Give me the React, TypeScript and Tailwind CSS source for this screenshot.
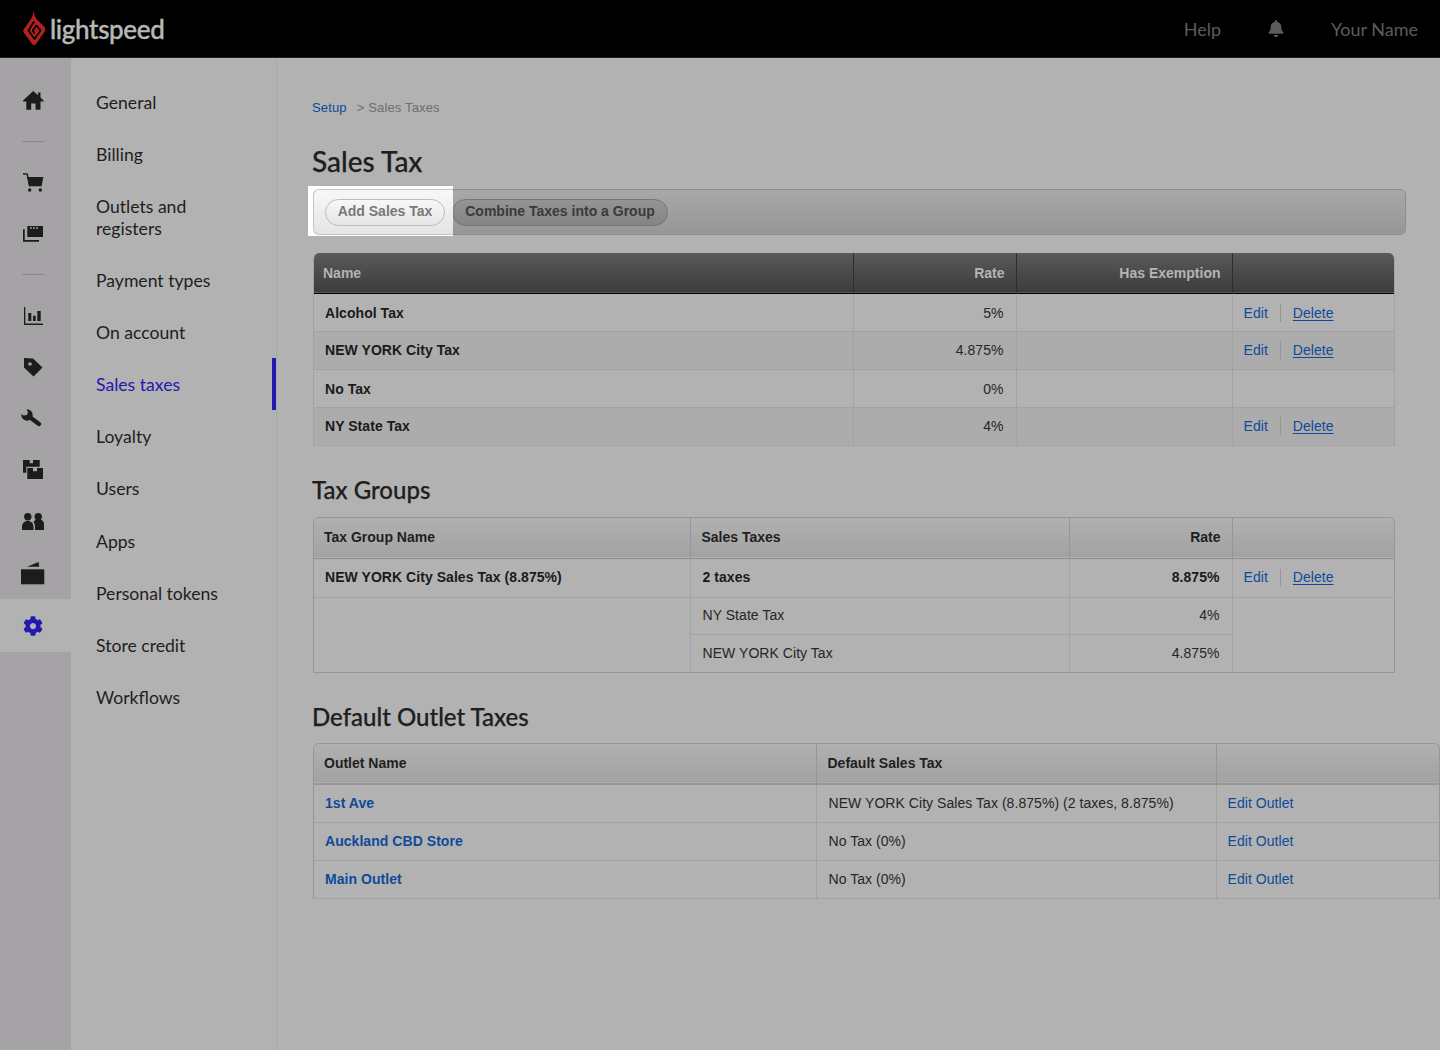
import { FaBell, FaCog } from "react-icons/fa";

const lato = "font-['Lato','Noto_Sans',sans-serif]";
const heading = "font-medium text-[#1e1e1e] [-webkit-text-stroke:0.25px_#1e1e1e]";
const ink = "#1c1c1c";
const railBg = "#a5a3a6";

const navItems = [
  "General",
  "Billing",
  "Outlets and registers",
  "Payment types",
  "On account",
  "Sales taxes",
  "Loyalty",
  "Users",
  "Apps",
  "Personal tokens",
  "Store credit",
  "Workflows",
];

function LogoMark() {
  return (
    <svg width="23" height="35" viewBox="0 0 23 35" fill="none">
      <path d="M10.500 0 Q11 5 13.500 8 L21.500 16 Q23 18.500 21.500 21 L12.500 33.500 Q11 35 9.500 33.500 L1 22 Q-0.500 20 1 18 L8 8 Q10 5 10.500 0 Z" fill="#b3201f" />
      <path d="M11 10.500 L5.500 19.500 L11.500 28 L17.500 19.500 L13.500 14.500 L9.800 19.500 L11.500 22.500" stroke="#000" strokeWidth="1.800" strokeLinejoin="round" />
    </svg>
  );
}

function HomeIcon() {
  return (
    <svg width="21" height="19" viewBox="0 0 21 19" fill={ink}>
      <path d="M10.300 0 L15 4.300 V1.500 H17.500 V6.600 L20.600 9.500 V10.500 H17.500 V18.700 H12.500 V12.500 H8.200 V18.700 H3.300 V10.500 H0 V9.500 Z" />
    </svg>
  );
}

function CartIcon() {
  return (
    <svg width="21" height="19" viewBox="0 0 21 19" fill={ink}>
      <path d="M0 0 L4.800 0.500 L7.400 13.300 H5.900 L3.500 1.800 L0 1.400 Z" />
      <path d="M4.200 4 H20.300 L18.700 13.300 H6.300 Z" />
      <circle cx="6.700" cy="17" r="1.700" />
      <circle cx="17.300" cy="17" r="1.700" />
    </svg>
  );
}

function CardsIcon() {
  return (
    <svg width="20" height="16" viewBox="0 0 20 16" fill={ink}>
      <path d="M4.300 0H20V11H4.300z" />
      <path d="M0 3.300H1.700V14H16V15.700H0z" />
      <circle cx="8" cy="2" r="0.900" fill={railBg} />
      <circle cx="11" cy="2" r="0.900" fill={railBg} />
      <circle cx="14" cy="2" r="0.900" fill={railBg} />
    </svg>
  );
}

function ChartIcon() {
  return (
    <svg width="19" height="18" viewBox="0 0 19 18" fill={ink}>
      <path d="M0 0h1.300V16.400H19V18H0z" />
      <path d="M4.300 6h3v8h-3zM9 8.700h2.700V14H9zM13.300 4h3.400v10h-3.400z" />
    </svg>
  );
}

function TagIcon() {
  return (
    <svg width="19" height="19" viewBox="0 0 19 19" fill={ink}>
      <path fillRule="evenodd" d="M0 0 L9 0.500 L18.500 9.500 L9.500 18.500 L0 9.500 Z M6 4.200 A1.800 1.800 0 1 0 6 7.800 A1.800 1.800 0 1 0 6 4.200 Z" />
    </svg>
  );
}

function WrenchIcon() {
  return (
    <svg width="21" height="18" viewBox="0 0 21 18" fill="none" className="-translate-x-[2px]">
      <circle cx="6" cy="6" r="5.700" fill={ink} />
      <path d="M6.500 6.500 L18 15" stroke={ink} strokeWidth="4.300" strokeLinecap="round" />
      <path d="M-1 -1 H5 L7 3.200 L6 6 L2.500 6.500 L-1 4 Z" fill={railBg} />
    </svg>
  );
}

function BoxesIcon() {
  return (
    <svg width="20" height="19" viewBox="0 0 20 19" fill={ink}>
      <path d="M0 0H6.700V3.300H10V0H16.700V6.700H3.300V12.700H0z" />
      <path d="M4.300 8H10V11.300H14V8H20V19H4.300z" />
    </svg>
  );
}

function UsersIcon() {
  return (
    <svg width="22" height="17" viewBox="0 0 22 17" fill={ink}>
      <circle cx="5.800" cy="3.700" r="3.700" />
      <circle cx="16.200" cy="3.700" r="3.700" />
      <path d="M0 17V13.500A5.700 5.700 0 0 1 11.500 13.500V17Z" />
      <path d="M13 17V13.500C13 11.500 12.500 10.200 11.500 9A5.600 5.600 0 0 1 22 12V17Z" />
    </svg>
  );
}

function WalletIcon() {
  return (
    <svg width="24" height="23" viewBox="0 0 24 23" fill={ink}>
      <path d="M6 4.700 L17.500 0 L18.300 4.700 Z" />
      <path d="M0 7.300H23.300V22.300H0z" />
    </svg>
  );
}

function RailItem({ children, className }: { children: React.ReactNode; className: string }) {
  return <div className={`flex items-center justify-center pr-[5px] ${className}`}>{children}</div>;
}

function Rail() {
  return (
    <div className="w-[71px] shrink-0 bg-[#a5a3a6] pt-4">
      <RailItem className="h-[52px]">
        <HomeIcon />
      </RailItem>
      <div className="my-[15px] ml-[22px] h-px w-[23px] bg-[#8b898c]" />
      <RailItem className="h-[51px]">
        <CartIcon />
      </RailItem>
      <RailItem className="h-[52px]">
        <CardsIcon />
      </RailItem>
      <div className="mt-[14px] mb-[15px] ml-[22px] h-px w-[23px] bg-[#8b898c]" />
      <RailItem className="h-[52px]">
        <ChartIcon />
      </RailItem>
      <RailItem className="h-[50px]">
        <TagIcon />
      </RailItem>
      <RailItem className="h-[51px]">
        <WrenchIcon />
      </RailItem>
      <RailItem className="h-[53px]">
        <BoxesIcon />
      </RailItem>
      <RailItem className="h-[50px]">
        <UsersIcon />
      </RailItem>
      <RailItem className="h-[53px] pt-px">
        <WalletIcon />
      </RailItem>
      <RailItem className="h-[53px] bg-[#b2b2b2]">
        <FaCog className="h-[20px] w-[20px] text-[#2318b0]" />
      </RailItem>
    </div>
  );
}

function SubNav() {
  return (
    <div className={`w-[206px] shrink-0 border-r border-[#a8a8a8] pt-[19px] text-[17.6px] leading-[22px] text-[#1e1e1e] ${lato}`}>
      {navItems.map((item) => {
        const active = item === "Sales taxes";
        return (
          <div key={item} className={`relative py-[15.033px] pl-[25px] pr-[50px] ${active ? "text-[#2318b0]" : ""}`}>
            {item}
            {active && <div className="absolute -top-px right-0 h-[52px] w-1 bg-[#2318b0]" />}
          </div>
        );
      })}
    </div>
  );
}

const th = "border-l px-[11px] text-[14px] font-bold";
const td = "border-l border-t border-[#a2a2a2] pl-[11px] pr-3 text-[14px] tracking-[0.05px]";
const tdWide = "border-l border-t border-[#a2a2a2] pl-3 pr-3 text-[14px] tracking-[0.05px]";

function EditDelete() {
  return (
    <div className="flex items-center text-[#0f4a9a]">
      <span>Edit</span>
      <span className="mx-3 h-[18px] w-px bg-[#969696]" />
      <span className="underline underline-offset-2">Delete</span>
    </div>
  );
}

function SalesTaxTable() {
  const rows = [
    { name: "Alcohol Tax", rate: "5%", edit: true, bg: "", pad: "pt-[2px]" },
    { name: "NEW YORK City Tax", rate: "4.875%", edit: true, bg: "bg-[#acacac]", pad: "" },
    { name: "No Tax", rate: "0%", edit: false, bg: "", pad: "pt-[2px]" },
    { name: "NY State Tax", rate: "4%", edit: true, bg: "bg-[#acacac]", pad: "" },
  ];
  return (
    <div className="mt-[18px] ml-px w-[1082px] overflow-hidden rounded-t-[6px] border-x border-b border-[#a2a2a2]">
      <table className="w-full table-fixed border-collapse text-[#262626]">
        <colgroup>
          <col className="w-[539px]" />
          <col className="w-[163px]" />
          <col className="w-[216px]" />
          <col />
        </colgroup>
        <thead>
          <tr className="h-[40px] border-b border-black bg-gradient-to-b from-[#5a5a5a] to-[#3c3c3c] text-[#b4b4b4]">
            <th className="pt-[2px] pl-[9px] text-left text-[14px] font-bold">Name</th>
            <th className={`${th} border-[#2e2e2e] pt-[2px] text-right`}>Rate</th>
            <th className={`${th} border-[#2e2e2e] pt-[2px] text-right`}>Has Exemption</th>
            <th className={`${th} border-[#2e2e2e]`} />
          </tr>
        </thead>
        <tbody>
          {rows.map((row, i) => (
            <tr key={row.name} className={`h-[38px] ${row.bg}`}>
              <td className={`${td} ${row.pad} border-l-0 font-bold text-[#1a1a1a] ${i === 0 ? "border-t-0" : ""}`}>{row.name}</td>
              <td className={`${td} ${row.pad} text-right ${i === 0 ? "border-t-0" : ""}`}>{row.rate}</td>
              <td className={`${td} ${i === 0 ? "border-t-0" : ""}`} />
              <td className={`${td} ${row.pad} ${i === 0 ? "border-t-0" : ""}`}>{row.edit && <EditDelete />}</td>
            </tr>
          ))}
        </tbody>
      </table>
    </div>
  );
}

function TaxGroupsTable() {
  return (
    <div className="mt-[10px] ml-px w-[1082px] overflow-hidden rounded-t-[6px] border border-[#969696]">
      <table className="w-full table-fixed border-collapse text-[#262626]">
        <colgroup>
          <col className="w-[376px]" />
          <col className="w-[379px]" />
          <col className="w-[163px]" />
          <col />
        </colgroup>
        <thead>
          <tr className="h-[40px] border-b border-[#8e8e8e] bg-gradient-to-b from-[#b0b0b0] to-[#a2a2a2] text-[#1f1f1f]">
            <th className="px-[10px] text-left text-[14px] font-bold">Tax Group Name</th>
            <th className={`${th} border-[#969696] text-left`}>Sales Taxes</th>
            <th className={`${th} border-[#969696] text-right`}>Rate</th>
            <th className={`${th} border-[#969696]`} />
          </tr>
        </thead>
        <tbody>
          <tr className="h-[39px]">
            <td className={`${td} border-t-0 border-l-0 font-bold text-[#1a1a1a]`}>NEW YORK City Sales Tax (8.875%)</td>
            <td className={`${tdWide} border-t-0 font-bold text-[#1a1a1a]`}>2 taxes</td>
            <td className={`${td} border-t-0 text-right font-bold text-[#1a1a1a]`}>8.875%</td>
            <td className={`${td} border-t-0`}>
              <EditDelete />
            </td>
          </tr>
          <tr className="h-[37px]">
            <td rowSpan={2} className={`${td} border-l-0`} />
            <td className={tdWide}>NY State Tax</td>
            <td className={`${td} text-right`}>4%</td>
            <td rowSpan={2} className={td} />
          </tr>
          <tr className="h-[38px]">
            <td className={tdWide}>NEW YORK City Tax</td>
            <td className={`${td} text-right`}>4.875%</td>
          </tr>
        </tbody>
      </table>
    </div>
  );
}

function OutletTable() {
  const rows = [
    { name: "1st Ave", tax: "NEW YORK City Sales Tax (8.875%) (2 taxes, 8.875%)" },
    { name: "Auckland CBD Store", tax: "No Tax (0%)" },
    { name: "Main Outlet", tax: "No Tax (0%)" },
  ];
  return (
    <div className="mt-[9px] ml-px overflow-hidden rounded-t-[6px] border border-b-0 border-[#969696]">
      <table className="w-full table-fixed border-collapse text-[#262626]">
        <colgroup>
          <col className="w-[502px]" />
          <col className="w-[400px]" />
          <col />
        </colgroup>
        <thead>
          <tr className="h-[40px] border-b-2 border-[#969696] bg-gradient-to-b from-[#b0b0b0] to-[#a2a2a2] text-[#1f1f1f]">
            <th className="px-[10px] text-left text-[14px] font-bold">Outlet Name</th>
            <th className={`${th} border-[#969696] text-left`}>Default Sales Tax</th>
            <th className={`${th} border-[#969696]`} />
          </tr>
        </thead>
        <tbody className="border-b border-[#a2a2a2]">
          {rows.map((row, i) => (
            <tr key={row.name} className="h-[38px]">
              <td className={`${td} border-l-0 font-bold text-[#0f4a9a] ${i === 0 ? "border-t-0" : ""}`}>{row.name}</td>
              <td className={`${tdWide} ${i === 0 ? "border-t-0" : ""}`}>{row.tax}</td>
              <td className={`${td} text-[#0f4a9a] ${i === 0 ? "border-t-0" : ""}`}>Edit Outlet</td>
            </tr>
          ))}
        </tbody>
      </table>
    </div>
  );
}

function Toolbar() {
  return (
    <div className="relative mt-[11px] ml-px flex h-[46px] w-[1093px] items-center rounded-[6px] border border-[#8e8e8e] bg-gradient-to-b from-[#a8a8a8] to-[#969696] pl-[138px]">
      {/* spotlight over the first button */}
      <div className="absolute -top-[4px] -left-[6px] flex h-[50px] w-[145px] items-center bg-white pt-[3px] pb-px pl-[5px]">
        <div className="flex h-[46px] w-[140px] items-center rounded-l-[6px] border border-r-0 border-[#c4c4c4] bg-gradient-to-b from-[#f8f8f8] to-[#e4e4e4] pl-[11px]">
          <button className="h-[27px] w-[120px] rounded-full border border-[#bcbcbc] bg-gradient-to-b from-[#f8f8f8] to-[#e6e6e6] pb-[2px] text-[14px] font-bold text-[#787878]">
            Add Sales Tax
          </button>
        </div>
      </div>
      <button className="h-[27px] w-[216px] rounded-full border border-[#767676] bg-gradient-to-b from-[#949494] to-[#848484] pb-[2px] text-[14px] font-bold text-[#3a3a3a]">
        Combine Taxes into a Group
      </button>
    </div>
  );
}

export default function App() {
  return (
    <div className="flex h-[1050px] w-[1440px] flex-col overflow-hidden bg-[#b2b2b2] font-['Liberation_Sans',Arial,sans-serif]">
      <header className={`flex h-[58px] shrink-0 items-center justify-between border-b border-[#222] bg-black pl-[23px] pr-[22px] ${lato}`}>
        <div className="flex items-center gap-[4px]">
          <LogoMark />
          <span className="text-[26px] font-medium leading-none tracking-[-0.35px] text-[#b8b8b8] [-webkit-text-stroke:0.4px_#b8b8b8]">lightspeed</span>
        </div>
        <div className="flex items-center pt-px text-[18px] text-[#5c5c5c]">
          <span>Help</span>
          <FaBell className="mr-[47px] ml-[47px] h-[17px] w-[16px] -translate-y-px" />
          <span>Your Name</span>
        </div>
      </header>
      <div className="flex flex-1">
        <Rail />
        <SubNav />
        <main className="min-w-0 flex-1 pl-[35px] pt-[41px]">
          <div className="flex text-[13px] leading-[17px] tracking-[0.15px] text-[#6e6e6e]">
            <span className="text-[#0f4a9a]">Setup</span>
            <span className="ml-[10px]">&gt; Sales Taxes</span>
          </div>
          <h1 className={`mt-[28px] text-[28px] leading-[34px] ${heading} ${lato}`}>Sales Tax</h1>
          <Toolbar />
          <SalesTaxTable />
          <h2 className={`mt-[27px] text-[24px] leading-[34px] ${heading} ${lato}`}>Tax Groups</h2>
          <TaxGroupsTable />
          <h2 className={`mt-[27px] text-[24px] leading-[34px] ${heading} ${lato}`}>Default Outlet Taxes</h2>
          <OutletTable />
        </main>
      </div>
    </div>
  );
}
